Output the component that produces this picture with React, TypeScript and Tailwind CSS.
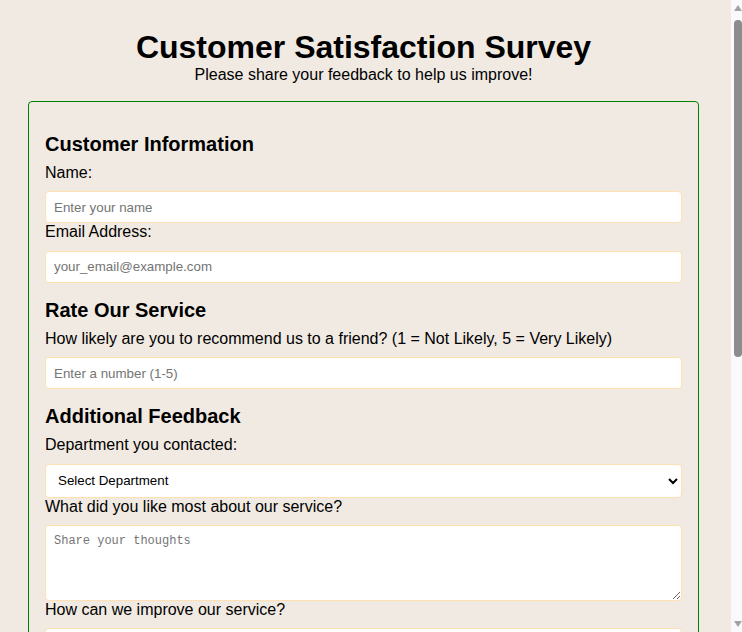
import React, { useState } from 'react';

const labelCls = 'block text-[16px] leading-[1.15] mb-[9px]';
const headingCls = 'text-[20px] font-bold leading-[23px] mt-4 mb-2';
const inputCls =
  'block w-full h-[32px] px-2 bg-white border border-[#ffe0b2] rounded-[4px] text-[13.33px] font-["Liberation_Sans",Arial,sans-serif] placeholder:text-[#757575] outline-none';
const areaCls =
  'block w-full h-[76px] px-2 py-2 bg-white border border-[#ffe0b2] rounded-[4px] text-[12px] leading-[15px] font-["Liberation_Mono","DejaVu_Sans_Mono",monospace] placeholder:text-[#757575] outline-none';
const selectCls =
  'block w-full h-[34px] px-2 bg-white border border-[#ffe0b2] rounded-[4px] text-[13.33px] font-["Liberation_Sans",Arial,sans-serif] outline-none';

const ScrollBar: React.FC = () => (
  <div className="w-[15px] h-full shrink-0 flex">
    <div className="w-[4px] h-full" />
    <div className="relative w-[11px] h-full bg-[#fafafa]">
      <svg className="absolute left-[3px] top-[5px]" width="8" height="6" viewBox="0 0 8 6">
        <path d="M4 0L8 6H0Z" fill="#a3a3a3" />
      </svg>
      <div className="absolute left-[3px] top-[20px] w-[8px] h-[337px] rounded-[4px] bg-[#8c8c8c]" />
      <svg className="absolute left-[3px] bottom-[5px]" width="8" height="6" viewBox="0 0 8 6">
        <path d="M0 0H8L4 6Z" fill="#a3a3a3" />
      </svg>
    </div>
  </div>
);

const App: React.FC = () => {
  const [dept, setDept] = useState('');

  return (
    <div className="h-screen overflow-hidden flex bg-[#f1eae2] text-black font-['Liberation_Sans',Arial,sans-serif]">
      <div className="w-[727px] shrink-0 h-full overflow-hidden">
        <div className="px-[28px] pt-[29px] pb-[33px]">
          <h1 className="text-[32px] font-bold leading-[37px] text-center">Customer Satisfaction Survey</h1>
          <p className="text-[16px] leading-[18px] text-center">Please share your feedback to help us improve!</p>

          <form
            className="mt-[17px] border border-[green] rounded-[4px] px-4 pt-[15px] pb-4"
            onSubmit={(e) => e.preventDefault()}
          >
            <h3 className={headingCls}>Customer Information</h3>
            <label className={labelCls}>Name:</label>
            <input type="text" placeholder="Enter your name" className={inputCls} />
            <label className={labelCls}>Email Address:</label>
            <input type="email" placeholder="your_email@example.com" className={inputCls} />

            <h3 className={headingCls}>Rate Our Service</h3>
            <label className={labelCls}>
              How likely are you to recommend us to a friend? (1 = Not Likely, 5 = Very Likely)
            </label>
            <input type="number" min={1} max={5} placeholder="Enter a number (1-5)" className={inputCls} />

            <h3 className={headingCls}>Additional Feedback</h3>
            <label className={labelCls}>Department you contacted:</label>
            <select value={dept} onChange={(e) => setDept(e.target.value)} className={selectCls}>
              <option value="">Select Department</option>
              <option value="sales">Sales</option>
              <option value="support">Customer Support</option>
              <option value="billing">Billing</option>
            </select>
            <label className={labelCls}>What did you like most about our service?</label>
            <textarea placeholder="Share your thoughts" className={areaCls} />
            <label className={labelCls}>How can we improve our service?</label>
            <textarea placeholder="Your suggestions" className={areaCls} />

            <h3 className={headingCls}>Follow-Up</h3>
            <label className={labelCls}>May we contact you about your feedback?</label>
            <select className={selectCls}>
              <option>Yes</option>
              <option>No</option>
            </select>
            <label className={labelCls}>Preferred contact method:</label>
            <input type="text" placeholder="Phone or email" className={inputCls} />
            <label className={labelCls}>Any other comments?</label>
            <textarea placeholder="Anything else" className={areaCls} />

            <button type="submit" className="mt-4 w-full h-[40px] bg-[green] text-white text-[16px] rounded-[4px]">
              Submit Feedback
            </button>
          </form>

          <p className="mt-5 text-center text-[16px] leading-[18px]">Thank you for your time!</p>
        </div>
      </div>
      <ScrollBar />
    </div>
  );
};

export default App;
